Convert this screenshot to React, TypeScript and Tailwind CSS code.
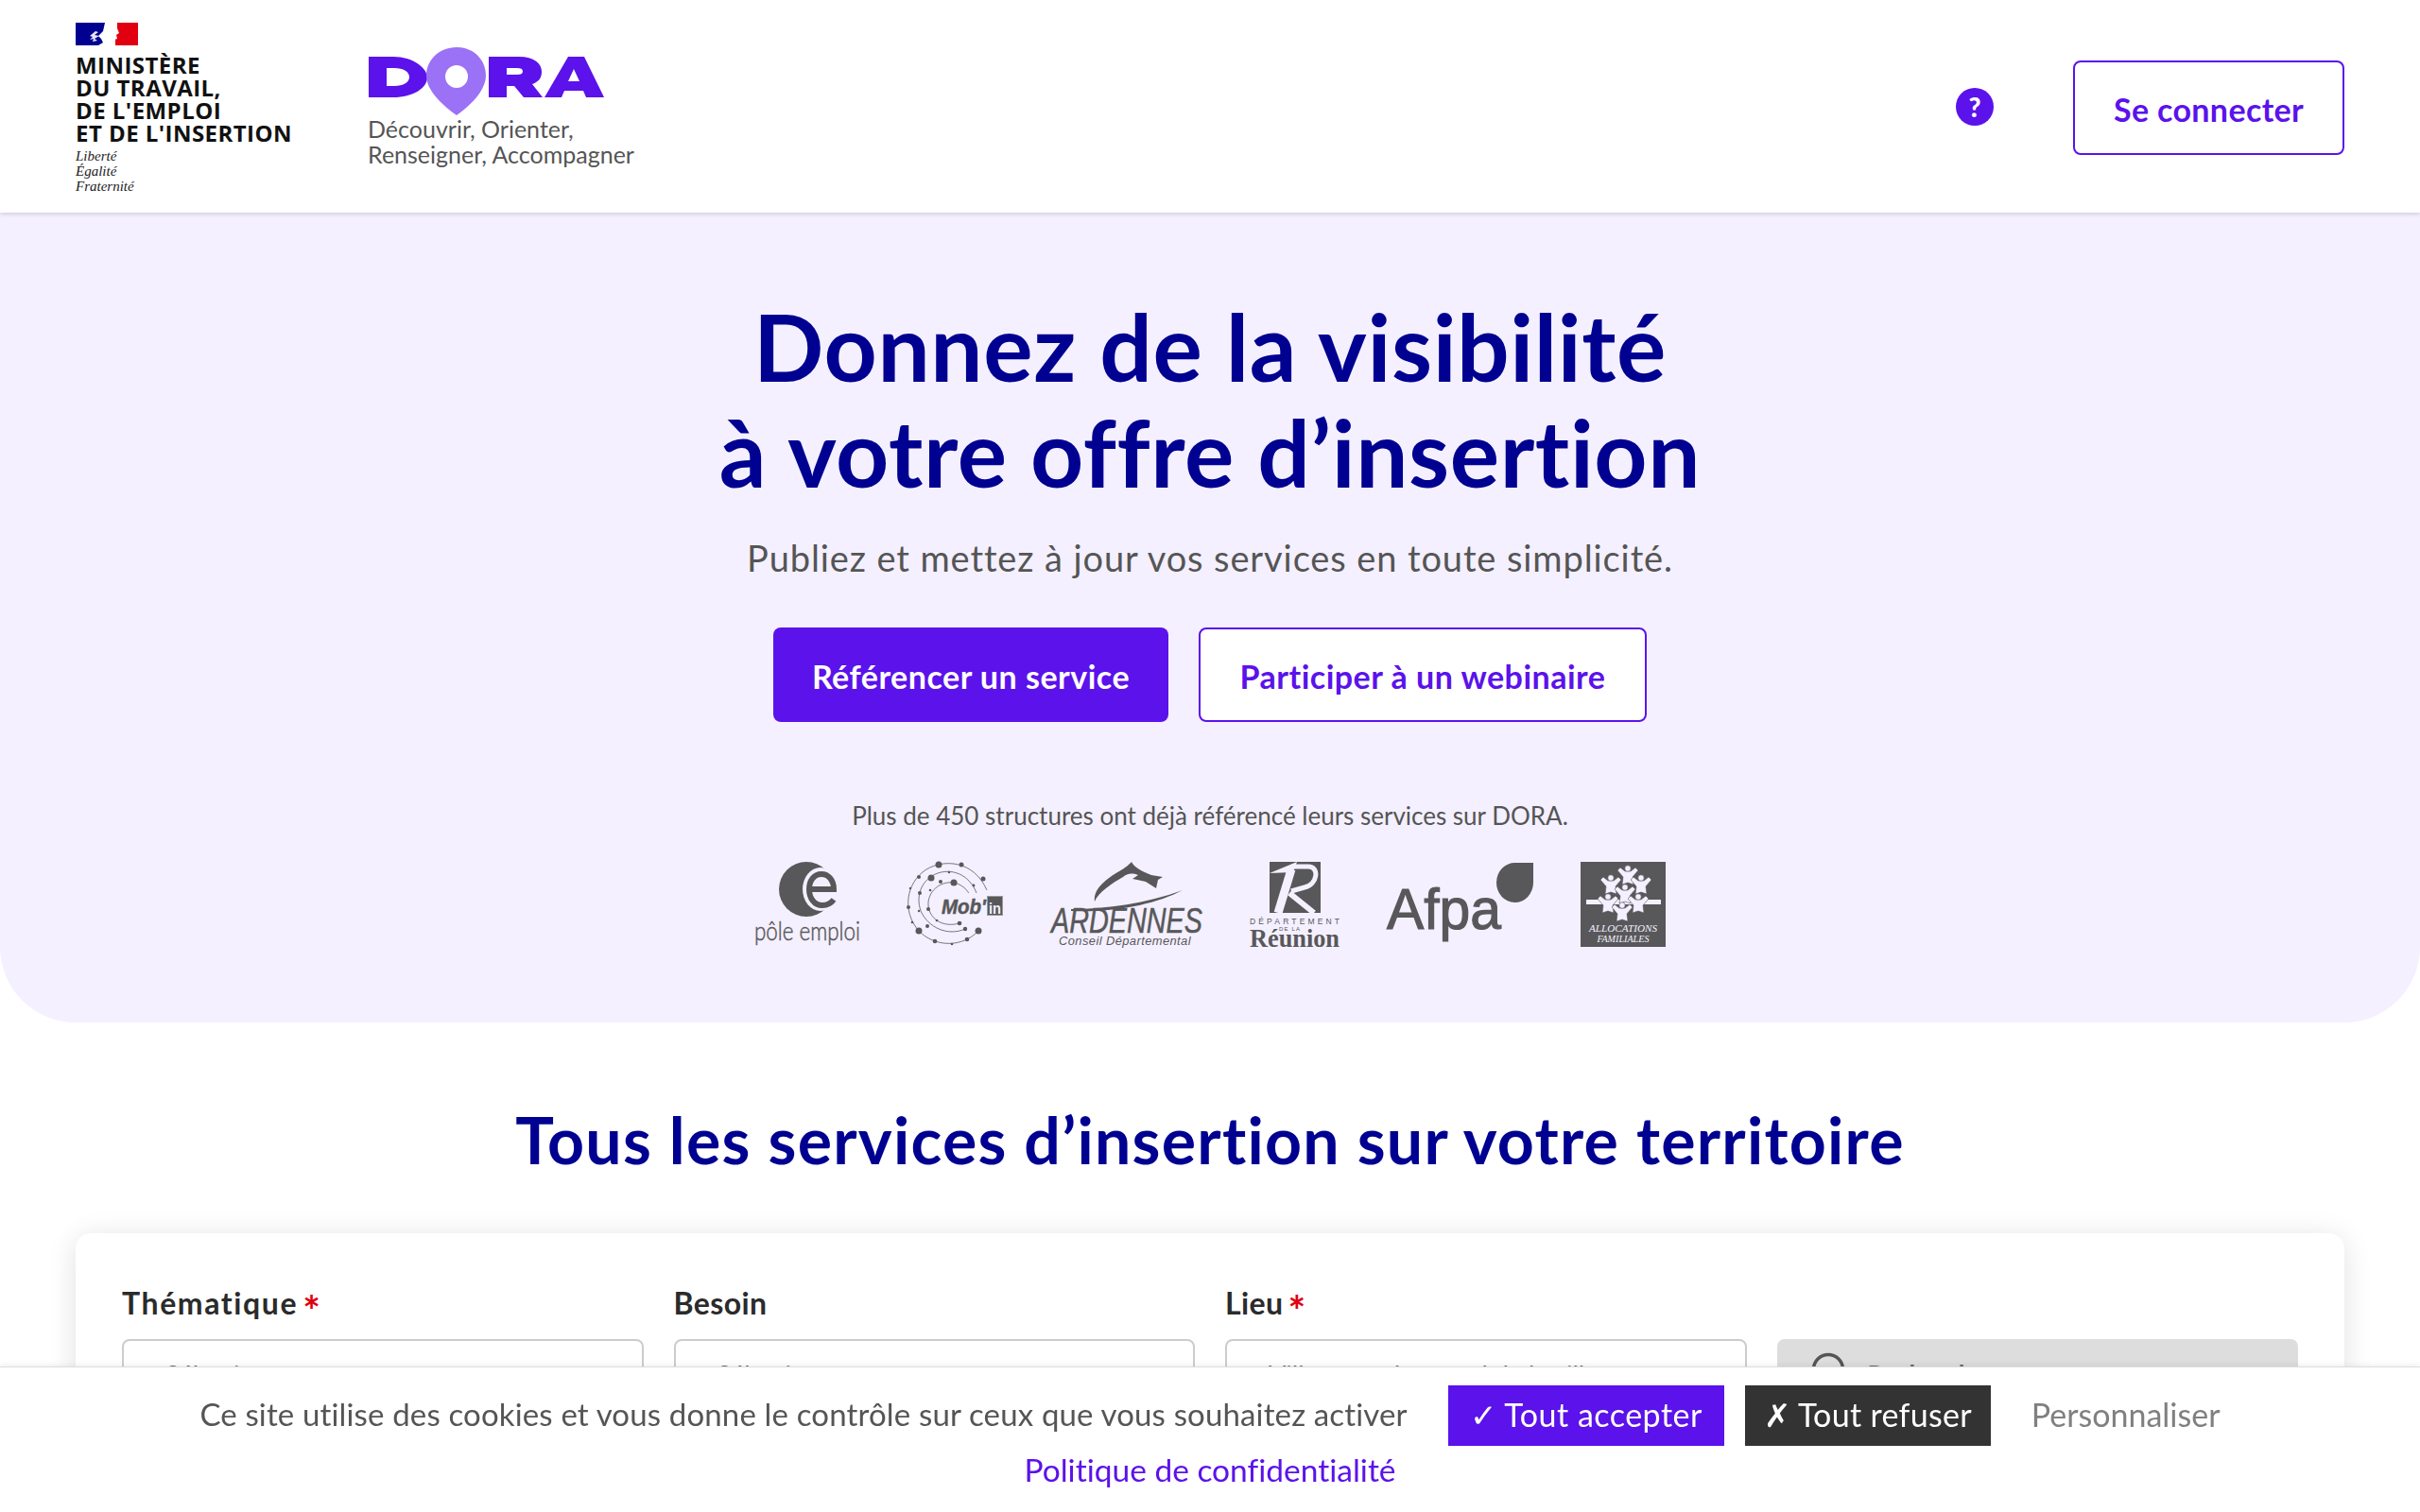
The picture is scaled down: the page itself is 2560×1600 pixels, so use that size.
const G = "#58585a";
const BG = "#f4f0ff";

function Flag() {
  return (
    <svg width="66" height="24" viewBox="0 0 66 24" className="block">
      <rect width="66" height="24" fill="#fff" />
      <rect width="33" height="24" fill="#000091" />
      <rect x="42" width="24" height="24" fill="#e1000f" />
      <path d="M31 0H44L44 6L46 11L43 13L44 17L38 19L42 24H24L29 21L27 17L24 14L29 9Z" fill="#fff" />
      <path d="M15 14L21 9L24 10L20 13L25 14L20 17L23 19L18 20L19 17L15 18L18 15Z" fill="#fff" opacity=".9" />
    </svg>
  );
}

function DoraMark() {
  return (
    <svg width="252" height="72" viewBox="0 0 252 72" className="block">
      <path fillRule="evenodd" fill="#5b12eb" d="M1 10H27C48 10 63 22 63 32C63 43 48 53 27 53H1ZM20 22V41H28C38 41 44 37 44 31.5C44 26 38 22 28 22Z" />
      <path fillRule="evenodd" fill="#5b12eb" d="M128 10H160C176 10 184 17 184 26C184 33 180 37 174 39L185 53H165L155 41H147V53H128ZM147 22V29H158C162 29 164 28 164 25.5C164 23 162 22 158 22Z" />
      <path fillRule="evenodd" fill="#5b12eb" d="M212 10H229L250 53H231L228 46H208L205 53H187ZM212 36H224L218 23Z" />
      <path fillRule="evenodd" fill="#9b71f5" d="M94 0C113 0 125 14 125 30C125 46 108 62 94 72C80 62 62 46 62 30C62 14 75 0 94 0ZM94 19A12 12 0 1 0 94 43A12 12 0 1 0 94 19Z" />
    </svg>
  );
}

function PoleEmploi() {
  return (
    <svg width="112" height="90" viewBox="0 0 112 90" className="block overflow-visible">
      <circle cx="55" cy="29" r="29" fill={G} />
      <ellipse cx="70" cy="29" rx="19" ry="23" fill={BG} />
      <path d="M56 29H84C84 19 78 13 71 13C63 13 58 20 58 29C58 38 63 46 72 46C77 46 81 44 84 40" fill="none" stroke={G} strokeWidth="6" />
      <text x="0" y="83" fontFamily="Lato, sans-serif" fontSize="28" fontWeight="300" fill={G} stroke={G} strokeWidth=".5" textLength="112" lengthAdjust="spacingAndGlyphs">pôle emploi</text>
    </svg>
  );
}

function MobIn() {
  const dots: [number, number, number][] = [
    [33, 3, 3.5], [57, 3, 2.5], [80, 18, 2.5], [12, 16, 2], [3, 28, 1.2], [1, 48, 2],
    [5, 64, 1.3], [12, 73, 3.5], [29, 84, 2.3], [47, 87, 1.3], [63, 82, 2.3], [75, 73, 3.5],
    [25, 17, 3.5], [44, 11, 1.3], [70, 25, 1.4], [13, 33, 2], [12, 52, 1.2], [21, 68, 2], [61, 71, 2.2],
    [49, 22, 3.5], [35, 21, 2], [24, 30, 1.3], [22, 50, 2], [31, 62, 1.3], [55, 65, 2.3], [64, 35, 1.5],
  ];
  return (
    <svg width="102" height="90" viewBox="0 0 102 90" className="block overflow-visible">
      <g fill="none" stroke={G} strokeWidth=".8">
        <path d="M76 72C58 92 28 90 12 73C-6 53 -2 22 20 8C38 -3 70 -2 84 30" />
        <path d="M61 71C43 79 22 70 14 52C8 34 16 18 32 12C50 6 68 16 74 36" />
        <path d="M55 65C37 70 23 60 22 46C21 32 34 20 49 22C58 24 64 30 66 36" />
      </g>
      {dots.map(([x, y, r], i) => (
        <circle key={i} cx={x} cy={y} r={r} fill={G} />
      ))}
      <rect x="36" y="33" width="46" height="24" fill={BG} />
      <text x="36" y="55" fontFamily="Liberation Sans, sans-serif" fontWeight="700" fontStyle="italic" fontSize="22" fill={G} stroke={G} strokeWidth=".5" textLength="47" lengthAdjust="spacingAndGlyphs">Mob'</text>
      <rect x="84.5" y="36.5" width="16" height="20" fill={G} stroke="#999" />
      <text x="86" y="55" fontFamily="Liberation Sans, sans-serif" fontWeight="700" fontSize="17" fill={BG} textLength="13" lengthAdjust="spacingAndGlyphs">in</text>
    </svg>
  );
}

function Ardennes() {
  return (
    <svg width="160" height="90" viewBox="0 0 160 90" className="block overflow-visible">
      <path d="M46 42C44 28 60 17 72 10C79 6 82 3 85 0C88 6 96 10 106 14L118 16L113 19L111 28L100 21L91 19L86 18L92 14C84 11 80 13 76 16C64 23 50 32 46 42Z" fill={G} />
      <path d="M21 50C60 50 100 44 139 30C112 44 70 54 21 52Z" fill={G} />
      <text x="0" y="75" fontFamily="Liberation Sans, sans-serif" fontStyle="italic" fontSize="36" fill={G} stroke={G} strokeWidth=".5" textLength="160" lengthAdjust="spacingAndGlyphs">ARDENNES</text>
      <text x="8" y="88" fontFamily="Liberation Sans, sans-serif" fontStyle="italic" fontSize="12.5" letterSpacing=".4" fill={G} textLength="140" lengthAdjust="spacingAndGlyphs">Conseil Départemental</text>
    </svg>
  );
}

function Reunion() {
  return (
    <svg width="95" height="90" viewBox="0 0 95 90" className="block overflow-visible">
      <rect x="21" y="0" width="54" height="54" fill={G} />
      <path d="M21 12L50 0L46 11Z" fill={BG} />
      <g fill="none" stroke={BG} strokeLinecap="butt">
        <path d="M30 54L44 8" strokeWidth="9" />
        <path d="M44 5H62C74 5 72 24 58 27L44 31" strokeWidth="5" />
        <path d="M42 33L68 54" strokeWidth="6" />
      </g>
      <text x="0" y="66" fontFamily="Liberation Sans, sans-serif" fontSize="8.5" fill={G} textLength="95">DÉPARTEMENT</text>
      <text x="31" y="73" fontFamily="Liberation Sans, sans-serif" fontSize="6" fill={G} textLength="22">DE LA</text>
      <text x="0" y="90" fontFamily="Liberation Serif, serif" fontWeight="700" fontSize="27" fill={G} textLength="95" lengthAdjust="spacingAndGlyphs">Réunion</text>
    </svg>
  );
}

function Afpa() {
  return (
    <svg width="155" height="90" viewBox="0 0 155 90" className="block overflow-visible">
      <text x="0" y="71" fontFamily="Liberation Sans, sans-serif" fontSize="62" fill={G} stroke={G} strokeWidth="1.2" textLength="121" lengthAdjust="spacingAndGlyphs">Afpa</text>
      <path d="M136 1H155V22A19.5 21 0 1 1 136 1Z" fill={G} />
    </svg>
  );
}

function Caf() {
  const people: [number, number][] = [[50, 14], [32, 24], [64, 24], [47, 34], [29, 44], [61, 44], [44, 53]];
  return (
    <svg width="90" height="90" viewBox="0 0 90 90" className="block overflow-visible">
      <rect width="90" height="90" fill={G} />
      <rect x="6" y="40" width="79" height="5" fill={BG} />
      {people.map(([x, y], i) => (
        <g key={i} transform={`translate(${x} ${y})`} fill={BG} stroke={G} strokeWidth=".6">
          <path d="M-11 -5L-8 -8L-3 -4H3L8 -8L11 -5L5 2L6 10L0 8L-6 10L-5 2Z" />
          <circle cx="0" cy="-7" r="3.2" />
        </g>
      ))}
      <text x="45" y="74" textAnchor="middle" fontFamily="Liberation Serif, serif" fontStyle="italic" fontSize="10" fill={BG} textLength="72" lengthAdjust="spacingAndGlyphs">ALLOCATIONS</text>
      <text x="45" y="85" textAnchor="middle" fontFamily="Liberation Serif, serif" fontStyle="italic" fontSize="10" fill={BG} textLength="55" lengthAdjust="spacingAndGlyphs">FAMILIALES</text>
    </svg>
  );
}

function Field({ label, required, value, labelClass }: { label: string; required?: boolean; value: string; labelClass: string }) {
  return (
    <div className="flex flex-col">
      <div className="mb-[22px] flex h-[32px] items-center text-[32px] leading-[32px] font-bold text-[#2b2b2b]">
        <span className={labelClass}>{label}</span>
        {required && <span className="ml-[5px] h-[32px] pt-[7px] text-[44px] leading-[32px] text-[#e1000f]">*</span>}
      </div>
      <div className="h-[72px] rounded-[8px] border-2 border-[#cccccc] bg-white pl-[44px] pt-[20px] text-[27px] leading-[32px] text-[#666]">
        {value}
      </div>
    </div>
  );
}

export default function App() {
  return (
    <div className="h-[1600px] overflow-hidden bg-white font-['Lato',sans-serif] [font-variant-ligatures:none]">
      <header className="relative z-10 flex h-[225px] items-center bg-white px-[80px] shadow-[0_1px_5px_rgba(0,0,0,0.18)]">
        <div className="flex h-full flex-col pt-[24px]">
          <Flag />
          <div className="mt-[9px] text-[24px] leading-[24px] font-bold tracking-[0.45px] text-[#111] font-['Open_Sans',sans-serif]">
            <div>MINISTÈRE</div>
            <div>DU TRAVAIL,</div>
            <div>DE L'EMPLOI</div>
            <div>ET DE L'INSERTION</div>
          </div>
          <div className="mt-[4px] text-[15px] leading-[16px] italic text-[#222] font-['Liberation_Serif',serif]">
            <div>Liberté</div>
            <div>Égalité</div>
            <div>Fraternité</div>
          </div>
        </div>
        <div className="ml-[80px] flex h-full flex-col pt-[50px]">
          <DoraMark />
          <div className="mt-[1px] text-[25px] leading-[27px] text-[#555]">
            <div>Découvrir, Orienter,</div>
            <div>Renseigner, Accompagner</div>
          </div>
        </div>
        <div className="ml-auto flex items-center">
          <div className="flex h-[40px] w-[40px] items-center justify-center rounded-full bg-[#5b12eb] text-[28px] leading-none font-black text-white">?</div>
          <div className="mt-[2px] ml-[84px] flex h-[100px] w-[287px] items-center justify-center rounded-[8px] border-2 border-[#5b12eb] pt-[3px] text-[34px] font-bold tracking-[0.35px] text-[#5b12eb]">
            Se connecter
          </div>
        </div>
      </header>

      <section className="flex h-[857px] flex-col items-center rounded-b-[80px] bg-[#f4f0ff] pt-[85px]">
        <h1 className="text-center text-[98px] leading-[112px] font-bold tracking-[0.6px] text-[#000091]">
          <div>Donnez de la visibilité</div>
          <div>à votre offre d’insertion</div>
        </h1>
        <p className="mt-[32px] text-[38px] leading-[48px] tracking-[0.9px] text-[#555]">
          Publiez et mettez à jour vos services en toute simplicité.
        </p>
        <div className="mt-[50px] flex gap-[32px]">
          <div className="flex h-[100px] w-[418px] items-center justify-center rounded-[8px] bg-[#5b12eb] pt-[3px] text-[34px] font-bold tracking-[0.5px] text-white">
            Référencer un service
          </div>
          <div className="flex h-[100px] w-[474px] items-center justify-center rounded-[8px] border-2 border-[#5b12eb] bg-white pt-[3px] text-[34px] font-bold tracking-[0.5px] text-[#5b12eb]">
            Participer à un webinaire
          </div>
        </div>
        <p className="mt-[83px] text-[26px] leading-[32px] text-[#555]">
          Plus de 450 structures ont déjà référencé leurs services sur DORA.
        </p>
        <div className="mt-[33px] flex items-center gap-[50px]">
          <PoleEmploi />
          <MobIn />
          <Ardennes />
          <Reunion />
          <Afpa />
          <Caf />
        </div>
      </section>

      <h2 className="mt-[84px] text-center text-[68px] leading-[80px] font-bold tracking-[1.25px] text-[#000091]">
        Tous les services d’insertion sur votre territoire
      </h2>

      <div className="mx-[80px] mt-[59px] rounded-[16px] bg-white px-[49px] pt-[58px] pb-[40px] shadow-[0_4px_30px_rgba(0,0,0,0.12)]">
        <div className="grid grid-cols-4 gap-x-[32px]">
          <Field label="Thématique" required value="Sélectionner" labelClass="tracking-[1.6px]" />
          <Field label="Besoin" value="Sélectionner" labelClass="tracking-[0.4px]" />
          <Field label="Lieu" required value="Ville ou code postal de la ville" labelClass="tracking-[0.4px]" />
          <div className="pt-[54px]">
            <div className="flex h-[72px] items-start rounded-[8px] bg-[#dddddd] pl-[36px] pt-[14px] text-[27px] font-bold leading-[32px] text-[#666]">
              <svg width="36" height="36" viewBox="0 0 36 36" className="mr-[24px] shrink-0">
                <circle cx="18" cy="18" r="15.5" fill="none" stroke="#555" strokeWidth="3.5" />
              </svg>
              <span className="pt-[7px]">Rechercher</span>
            </div>
          </div>
        </div>
      </div>

      <div className="fixed right-0 bottom-0 left-0 z-20 h-[154px] border-t border-[#ddd] bg-white shadow-[0_-2px_6px_rgba(0,0,0,0.06)]">
        <div className="mt-[19px] flex h-[64px] items-center justify-center text-[34px]">
          <span className="pb-[2px] text-[33px] tracking-[0.15px] text-[#555]">Ce site utilise des cookies et vous donne le contrôle sur ceux que vous souhaitez activer</span>
          <span className="ml-[43px] flex h-[64px] w-[292px] items-center justify-center bg-[#5b12eb] pb-[4px] tracking-[0.5px] text-white">✓ Tout accepter</span>
          <span className="ml-[22px] flex h-[64px] w-[260px] items-center justify-center bg-[#333] pb-[4px] tracking-[0.3px] text-white">✗ Tout refuser</span>
          <span className="ml-[43px] pb-[4px] text-[#808080]">Personnaliser</span>
        </div>
        <div className="mt-[5px] text-center text-[33.5px] leading-[40px] text-[#5b12eb]">Politique de confidentialité</div>
      </div>
    </div>
  );
}
